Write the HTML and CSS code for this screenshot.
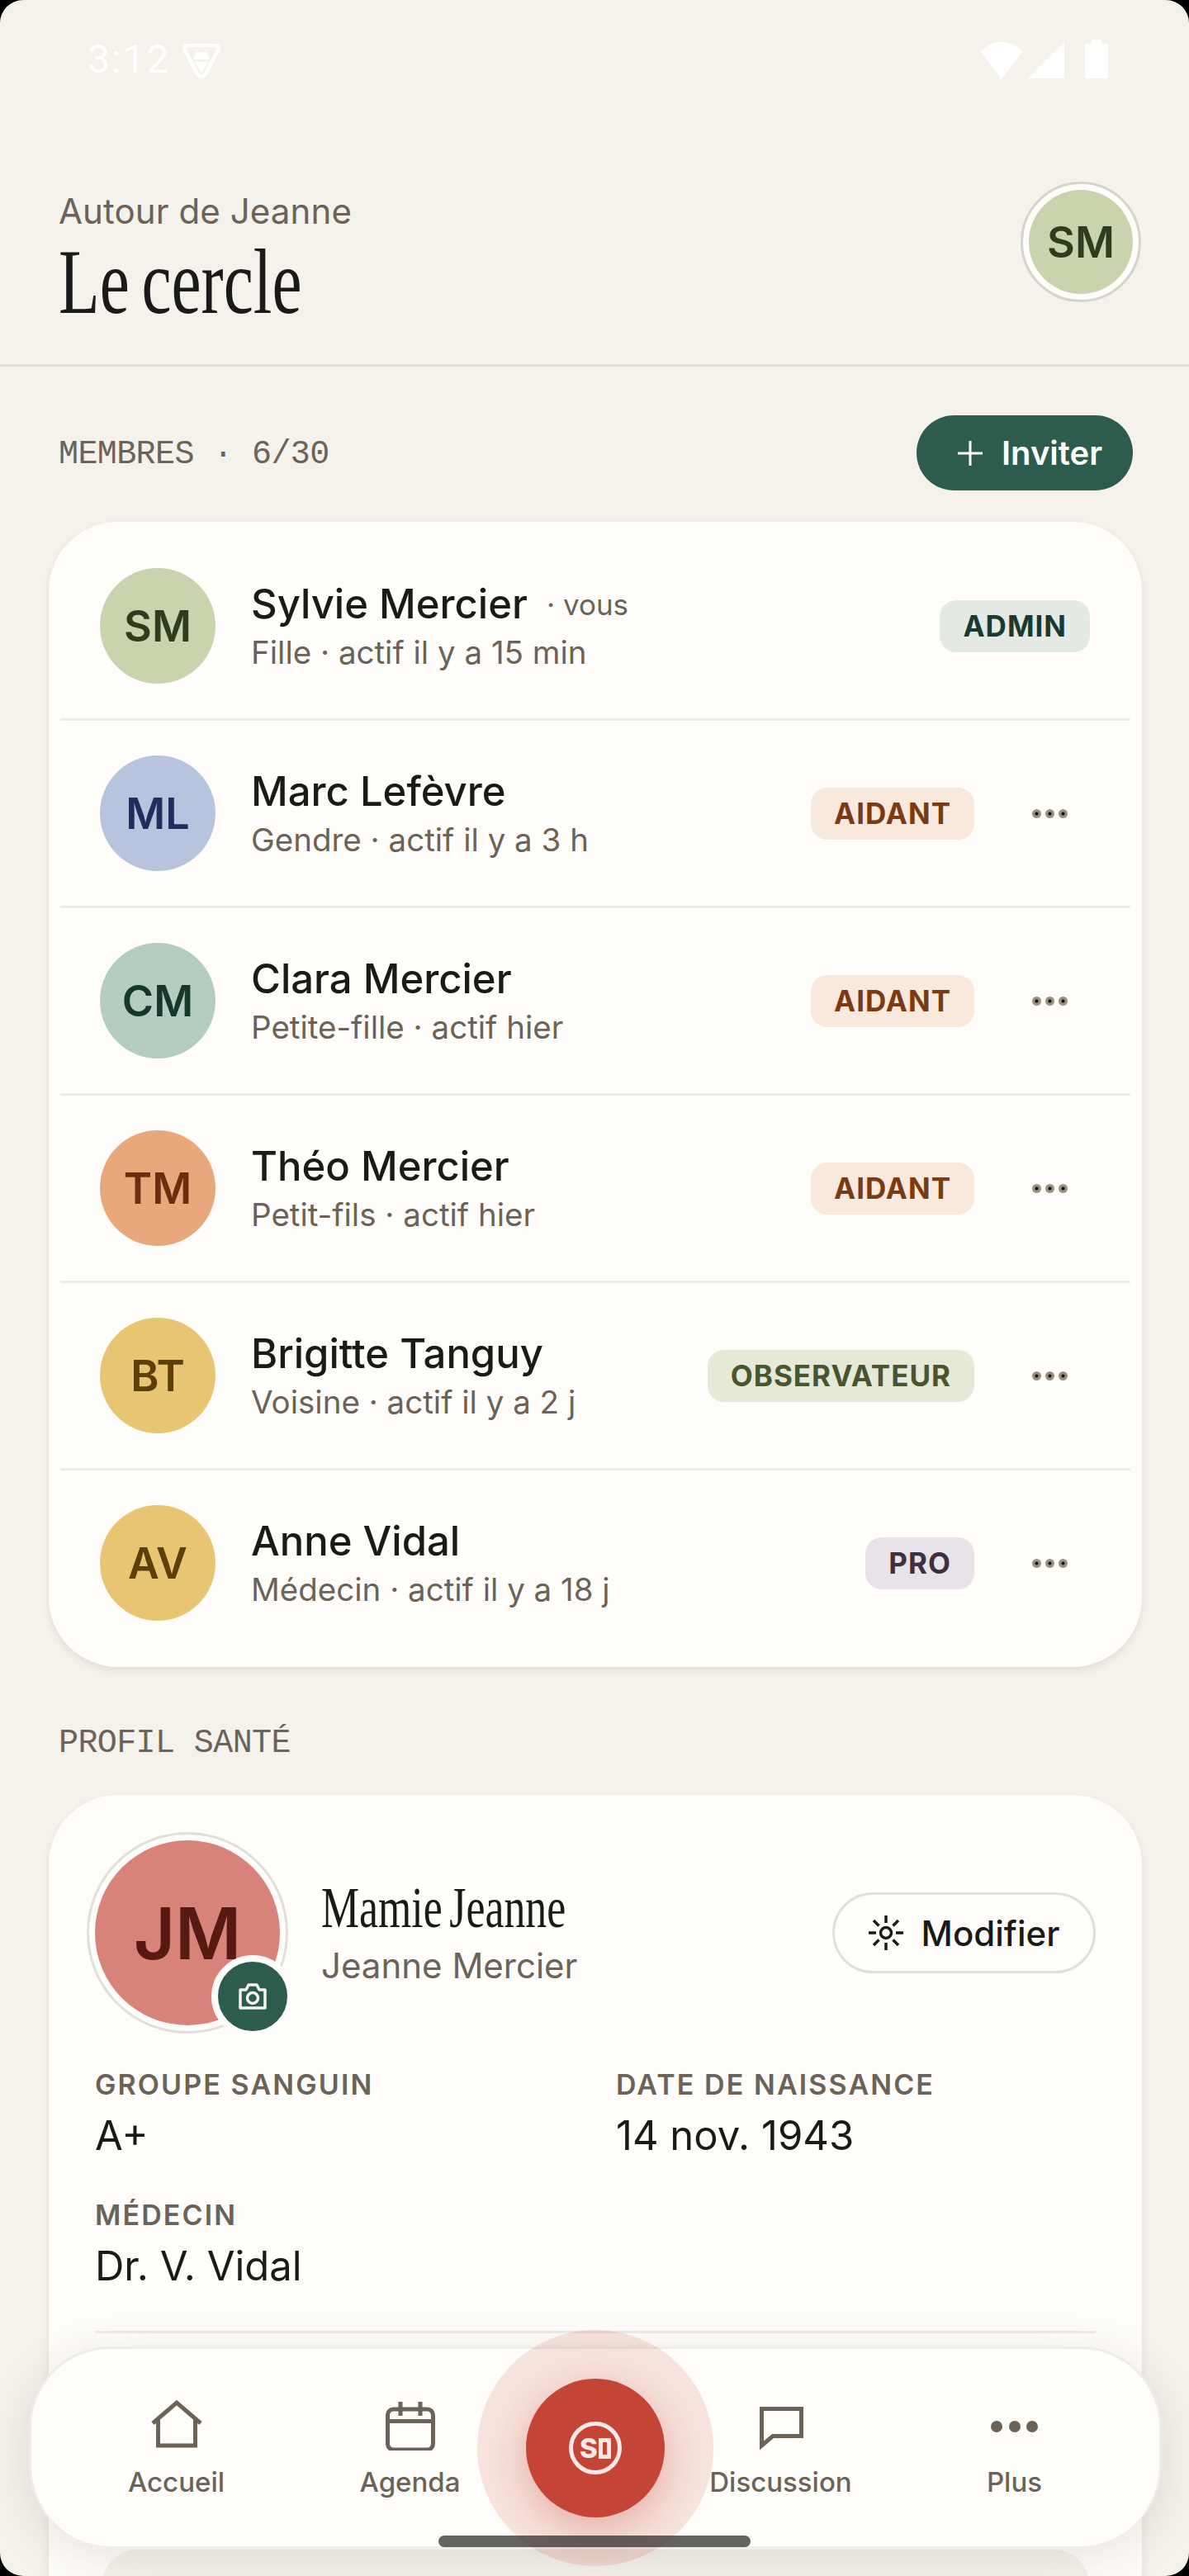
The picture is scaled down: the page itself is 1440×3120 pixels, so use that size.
FILE: index.html
```html
<!DOCTYPE html>
<html lang="fr">
<head>
    <meta charset="UTF-8">
    <meta name="viewport" content="width=device-width, initial-scale=1.0">
    <title>Le cercle</title>
    <link rel="stylesheet" href="styles.css">
</head>
<body>
    <div class="screen">
        <div class="status-bar">
            <div class="status-left">
                <span class="status-time">3:12</span>
                <svg class="shield" width="46" height="44" viewBox="0 0 46 44">
                    <path d="M7 3 H39 Q45 3 43 9 L28 38 Q23 44 18 38 L3 9 Q1 3 7 3 Z" fill="none" stroke="#fff" stroke-width="4.5"/>
                    <path d="M13 20 Q14 11 23 11 Q32 11 33 20 Z" fill="#fff"/>
                    <path d="M14 23 H32 L23 36 Z" fill="#fff"/>
                    <path d="M16 7 L18 11 M30 7 L28 11" stroke="#fff" stroke-width="1.5"/>
                </svg>
            </div>
            <div class="status-right">
                <svg width="54" height="46" viewBox="0 0 54 46"><path d="M1 12 Q27 -11 53 12 L27 46 Z" fill="#fff"/></svg>
                <svg width="44" height="46" viewBox="0 0 44 46"><path d="M0 45 L44 1 V45 Z" fill="#fff"/></svg>
                <svg class="battery" width="28" height="48" viewBox="0 0 28 48"><path d="M8 0 H20 V5 H26 Q28 5 28 7 V45 Q28 47 26 47 H2 Q0 47 0 45 V7 Q0 5 2 5 H8 Z" fill="#fff"/></svg>
            </div>
        </div>

        <header class="page-header">
            <div class="header-text">
                <div class="header-sub">Autour de Jeanne</div>
                <h1 class="header-title">Le cercle</h1>
            </div>
            <div class="me-ring"><div class="me-avatar">SM</div></div>
        </header>

        <div class="section-head">
            <span class="section-label">MEMBRES · 6/30</span>
            <button class="invite-btn">
                <svg width="32" height="32" viewBox="0 0 32 32"><path d="M16 1 V31 M1 16 H31" stroke="#fff" stroke-width="3"/></svg>
                Inviter
            </button>
        </div>

        <div class="card members">
            <div class="member">
                <div class="avatar av-sm">SM</div>
                <div class="member-info">
                    <div class="member-name">Sylvie Mercier <span class="me-tag">· vous</span></div>
                    <div class="member-sub">Fille · actif il y a 15 min</div>
                </div>
                <span class="badge badge-admin">ADMIN</span>
            </div>
            <div class="member">
                <div class="avatar av-ml">ML</div>
                <div class="member-info">
                    <div class="member-name">Marc Lefèvre</div>
                    <div class="member-sub">Gendre · actif il y a 3 h</div>
                </div>
                <span class="badge badge-aidant">AIDANT</span>
                <div class="more"><i></i><i></i><i></i></div>
            </div>
            <div class="member">
                <div class="avatar av-cm">CM</div>
                <div class="member-info">
                    <div class="member-name">Clara Mercier</div>
                    <div class="member-sub">Petite-fille · actif hier</div>
                </div>
                <span class="badge badge-aidant">AIDANT</span>
                <div class="more"><i></i><i></i><i></i></div>
            </div>
            <div class="member">
                <div class="avatar av-tm">TM</div>
                <div class="member-info">
                    <div class="member-name">Théo Mercier</div>
                    <div class="member-sub">Petit-fils · actif hier</div>
                </div>
                <span class="badge badge-aidant">AIDANT</span>
                <div class="more"><i></i><i></i><i></i></div>
            </div>
            <div class="member">
                <div class="avatar av-bt">BT</div>
                <div class="member-info">
                    <div class="member-name">Brigitte Tanguy</div>
                    <div class="member-sub">Voisine · actif il y a 2 j</div>
                </div>
                <span class="badge badge-obs">OBSERVATEUR</span>
                <div class="more"><i></i><i></i><i></i></div>
            </div>
            <div class="member">
                <div class="avatar av-bt">AV</div>
                <div class="member-info">
                    <div class="member-name">Anne Vidal</div>
                    <div class="member-sub">Médecin · actif il y a 18 j</div>
                </div>
                <span class="badge badge-pro">PRO</span>
                <div class="more"><i></i><i></i><i></i></div>
            </div>
        </div>

        <div class="section-head-plain">
            <span class="section-label">PROFIL SANTÉ</span>
        </div>

        <div class="card profile">
            <div class="profile-top">
                <div class="profile-ring">
                    <div class="profile-avatar">JM</div>
                    <div class="camera">
                        <svg width="36" height="34" viewBox="0 0 36 34" fill="none" stroke="#f5f1eb" stroke-width="3.5">
                            <path d="M3 9 H10 L13 3 H23 L26 9 H33 V31 H3 Z" stroke-linejoin="round"/>
                            <circle cx="18" cy="19" r="6.5"/>
                        </svg>
                    </div>
                </div>
                <div class="profile-names">
                    <div class="profile-nick">Mamie Jeanne</div>
                    <div class="profile-full">Jeanne Mercier</div>
                </div>
                <button class="edit-btn">
                    <svg width="42" height="42" viewBox="0 0 42 42" fill="none" stroke="#1a1a18" stroke-width="3.5">
                        <circle cx="21" cy="21" r="6.5"/>
                        <path d="M21 0 V9 M21 33 V42 M0 21 H9 M33 21 H42 M6 6 L12.5 12.5 M29.5 29.5 L36 36 M36 6 L29.5 12.5 M12.5 29.5 L6 36"/>
                    </svg>
                    Modifier
                </button>
            </div>
            <div class="facts">
                <div class="fact">
                    <div class="fact-label">GROUPE SANGUIN</div>
                    <div class="fact-value">A+</div>
                </div>
                <div class="fact">
                    <div class="fact-label">DATE DE NAISSANCE</div>
                    <div class="fact-value">14 nov. 1943</div>
                </div>
                <div class="fact">
                    <div class="fact-label">MÉDECIN</div>
                    <div class="fact-value">Dr. V. Vidal</div>
                </div>
            </div>
            <div class="profile-line"></div>
            <div class="next-box"></div>
        </div>

        <nav class="bottom-nav">
            <div class="nav-item">
                <svg width="64" height="64" viewBox="0 0 64 64" fill="none" stroke="#6b6358" stroke-width="5">
                    <path d="M3 31 L32 6 L61 31"/>
                    <path d="M9.500 26 V58 H54.500 V26"/>
                </svg>
                <span>Accueil</span>
            </div>
            <div class="nav-item">
                <svg width="64" height="64" viewBox="0 0 64 64" fill="none" stroke="#6b6358" stroke-width="5">
                    <rect x="4.500" y="14" width="55" height="49" rx="7"/>
                    <path d="M4 28.500 H60 M20 5 V22 M44 5 V22"/>
                </svg>
                <span>Agenda</span>
            </div>
            <div class="nav-gap"></div>
            <div class="nav-item">
                <svg width="64" height="64" viewBox="0 0 64 64" fill="none" stroke="#6b6358" stroke-width="5">
                    <path d="M8.500 13.500 H56.500 V46.500 H22 L8.500 58 Z"/>
                </svg>
                <span>Discussion</span>
            </div>
            <div class="nav-item">
                <svg width="64" height="64" viewBox="0 0 64 64" fill="#6b6358">
                    <circle cx="10" cy="35" r="7"/>
                    <circle cx="32" cy="35" r="7"/>
                    <circle cx="53" cy="35" r="7"/>
                </svg>
                <span>Plus</span>
            </div>
        </nav>

        <div class="sos-halo">
            <div class="sos-btn">
                <div class="sos-ring"><span class="sos-s">S</span><span class="sos-o"></span></div>
            </div>
        </div>
        <div class="home-bar"></div>
    </div>
</body>
</html>
```

FILE: styles.css
```css
* {
    box-sizing: border-box;
}
html, body {
    margin: 0;
    padding: 0;
    background: #000;
}
body {
    width: 1440px;
    height: 3120px;
    overflow: hidden;
    font-family: Inter, "Noto Sans", sans-serif;
    color: #1a1a18;
}
.screen {
    position: relative;
    width: 1440px;
    height: 3120px;
    overflow: hidden;
    border-radius: 28px;
    background: #f5f1eb;
}

/* status bar */
.status-bar {
    height: 110px;
    padding: 48px 98px 0 106px;
    display: flex;
    justify-content: space-between;
    align-items: flex-start;
}
.status-left {
    display: flex;
    align-items: center;
    gap: 14px;
}
.status-time {
    font-family: Roboto, sans-serif;
    font-size: 48px;
    line-height: 48px;
    font-weight: 400;
    letter-spacing: 2px;
    color: #fff;
}
.shield {
    margin-top: 4px;
}
.status-right {
    display: flex;
    align-items: flex-start;
    gap: 5px;
    padding-top: 2px;
}
.status-right .battery {
    margin-left: 20px;
    margin-top: -2px;
}

/* header */
.page-header {
    height: 334px;
    padding: 0 58px 0 71px;
    border-bottom: 3px solid #e3e0da;
    display: flex;
    justify-content: space-between;
    align-items: flex-start;
}
.header-sub {
    margin-top: 121px;
    font-size: 42px;
    line-height: 50px;
    letter-spacing: 0.100px;
    color: #6b6358;
}
.header-title {
    margin: 4px 0 0;
    font-family: "Liberation Serif", serif;
    font-size: 113px;
    line-height: 112px;
    font-weight: 400;
    word-spacing: -8px;
    white-space: nowrap;
    transform: scaleX(0.72);
    transform-origin: left center;
}
.me-ring {
    margin-top: 110px;
    width: 146px;
    height: 146px;
    border-radius: 50%;
    border: 3px solid #d5d3ce;
    background: #fffdf9;
    display: flex;
    align-items: center;
    justify-content: center;
}
.me-avatar {
    width: 126px;
    height: 126px;
    border-radius: 50%;
    background: #c9d4ae;
    color: #2e3d20;
    font-size: 52px;
    font-weight: 600;
    display: flex;
    align-items: center;
    justify-content: center;
}

/* sections */
.section-head {
    margin-top: 59px;
    padding: 0 68px 0 71px;
    height: 91px;
    display: flex;
    justify-content: space-between;
    align-items: center;
}
.section-head .section-label {
    margin-top: 3px;
}
.section-label {
    font-family: "Liberation Mono", monospace;
    font-size: 40px;
    letter-spacing: -0.6px;
    color: #6b6358;
}
.invite-btn {
    width: 262px;
    height: 91px;
    padding: 0 0 0 49px;
    border: none;
    border-radius: 46px;
    background: #2d5c4f;
    color: #fff;
    font-family: Inter, sans-serif;
    font-size: 40px;
    font-weight: 600;
    display: flex;
    align-items: center;
    gap: 22px;
}
.section-head-plain {
    margin-top: 69px;
    padding: 0 71px;
    height: 46px;
    display: flex;
    align-items: center;
}

/* cards */
.card {
    margin: 38px 57px 0 59px;
    background: #fffdf9;
    border-radius: 84px;
    box-shadow: 0 4px 10px rgba(60, 50, 40, 0.1);
}
.members {
    padding: 14px;
}
.member {
    height: 227px;
    padding: 0 49px 0 48px;
    border-bottom: 3px solid #eeece8;
    display: flex;
    align-items: center;
}
.member:last-child {
    height: 224px;
    border-bottom: none;
}
.avatar {
    width: 140px;
    height: 140px;
    border-radius: 50%;
    flex-shrink: 0;
    margin-right: 43px;
    font-size: 52px;
    font-weight: 600;
    display: flex;
    align-items: center;
    justify-content: center;
}
.av-sm { background: #c9d4ae; color: #2e3d20; }
.av-ml { background: #b8c4de; color: #232c5c; }
.av-cm { background: #b4cdc0; color: #17362c; }
.av-tm { background: #e8a87c; color: #6b2f10; }
.av-bt { background: #e8c572; color: #5c4008; }

.member-info {
    flex: 1;
    min-width: 0;
    padding-top: 4px;
}
.member-name {
    margin: 2px 0 -2px;
    font-size: 49px;
    line-height: 60px;
    font-weight: 500;
    white-space: nowrap;
}
.me-tag {
    margin-left: 10px;
    font-size: 35px;
    font-weight: 400;
    color: #6b6358;
    vertical-align: 4px;
}
.member-sub {
    font-size: 38.500px;
    line-height: 60px;
    color: #6b6358;
    white-space: nowrap;
}
.badge {
    height: 63px;
    padding: 0 28px;
    border-radius: 20px;
    font-size: 35px;
    font-weight: 700;
    letter-spacing: 1px;
    display: flex;
    align-items: center;
    flex-shrink: 0;
}
.badge-admin { background: #e4e9e4; color: #1a3a30; }
.badge-aidant { background: #f9e8dc; color: #7a3a14; }
.badge-obs { background: #e6e9d8; color: #4a5530; }
.badge-pro { background: #e8e3e8; color: #3f3040; }
.more {
    width: 98px;
    margin-left: 42px;
    display: flex;
    justify-content: center;
    gap: 5px;
}
.more i {
    width: 11px;
    height: 11px;
    border-radius: 50%;
    background: radial-gradient(circle, #111 1.500px, #9a9080 2.500px);
}

/* profile card */
.profile {
    margin-top: 40px;
    height: 1100px;
    padding: 45px 56px 0;
}
.profile-top {
    display: flex;
    align-items: flex-start;
}
.profile-ring {
    position: relative;
    width: 244px;
    height: 244px;
    margin-left: -10px;
    flex-shrink: 0;
    border-radius: 50%;
    border: 3px solid #e0dfda;
    display: flex;
    align-items: center;
    justify-content: center;
}
.profile-avatar {
    width: 224px;
    height: 224px;
    border-radius: 50%;
    background: #d8837a;
    color: #561a12;
    font-size: 87px;
    font-weight: 600;
    display: flex;
    align-items: center;
    justify-content: center;
}
.camera {
    position: absolute;
    right: -10px;
    bottom: -8px;
    width: 100px;
    height: 100px;
    border-radius: 50%;
    border: 8px solid #fffdf9;
    background: #2d5c4f;
    display: flex;
    align-items: center;
    justify-content: center;
}
.profile-names {
    margin-left: 40px;
    flex: 1;
    padding-top: 52px;
}
.profile-nick {
    font-family: "Liberation Serif", serif;
    font-size: 70px;
    line-height: 80px;
    word-spacing: -6px;
    white-space: nowrap;
    transform: scaleX(0.74);
    transform-origin: left center;
}
.profile-full {
    margin-top: 4px;
    font-size: 42px;
    line-height: 52px;
    color: #6b6358;
}
.edit-btn {
    margin-top: 73px;
    width: 319px;
    height: 98px;
    border: 3px solid #e0dfda;
    border-radius: 49px;
    background: transparent;
    color: #1a1a18;
    font-family: Inter, sans-serif;
    font-size: 42px;
    font-weight: 500;
    display: flex;
    align-items: center;
    justify-content: center;
    gap: 22px;
}
.facts {
    margin-top: 42px;
    display: grid;
    grid-template-columns: 1fr 1fr;
    column-gap: 50px;
    row-gap: 47px;
}
.fact-label {
    font-size: 34px;
    line-height: 40px;
    font-weight: 600;
    letter-spacing: 2.100px;
    color: #6b6358;
}
.fact-value {
    margin-top: 13px;
    font-size: 49px;
    line-height: 58px;
}
.profile-line {
    margin-top: 49px;
    height: 3px;
    background: #eeece8;
}
.next-box {
    margin: 262px 8px 0 9px;
    height: 120px;
    border-radius: 42px;
    background: #f5f1eb;
}

/* bottom nav */
.bottom-nav {
    position: absolute;
    left: 35px;
    right: 33px;
    bottom: 36px;
    height: 242px;
    padding: 59px 34px 0;
    border: 3px solid #eeece8;
    border-bottom: none;
    border-radius: 98px;
    background: #fffdf9;
    box-shadow: 0 12px 60px rgba(50, 45, 35, 0.12);
    display: grid;
    grid-template-columns: 283px 283px 166px 283px 283px;
    align-items: start;
}
.nav-item {
    display: flex;
    flex-direction: column;
    align-items: center;
    color: #6b6358;
    font-size: 33px;
    font-weight: 500;
}
.nav-item span {
    margin-top: 18px;
    line-height: 40px;
}
.sos-halo {
    position: absolute;
    left: 578px;
    top: 2822px;
    width: 286px;
    height: 286px;
    border-radius: 50%;
    background: rgba(196, 69, 54, 0.14);
    display: flex;
    align-items: center;
    justify-content: center;
}
.sos-btn {
    width: 168px;
    height: 168px;
    border-radius: 50%;
    background: #c44536;
    box-shadow: 0 14px 50px rgba(196, 69, 54, 0.35);
    display: flex;
    align-items: center;
    justify-content: center;
}
.sos-ring {
    width: 64px;
    height: 64px;
    border-radius: 50%;
    border: 5px solid #f7e9e6;
    display: flex;
    align-items: center;
    justify-content: center;
    color: #f7e9e6;
}
.sos-s {
    font-size: 33px;
    line-height: 32px;
    font-weight: 800;
}
.sos-o {
    width: 15px;
    height: 25px;
    margin-left: 1px;
    border: 5px solid #f7e9e6;
}
.home-bar {
    position: absolute;
    left: 531px;
    top: 3071px;
    width: 378px;
    height: 14px;
    border-radius: 7px;
    background: rgba(40, 40, 40, 0.72);
}
```
